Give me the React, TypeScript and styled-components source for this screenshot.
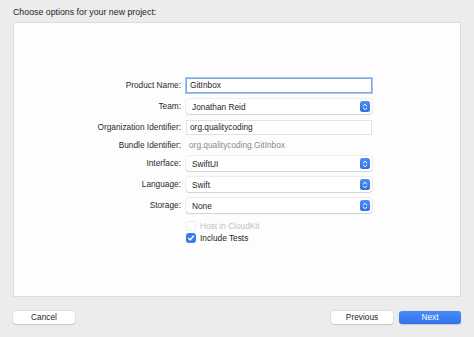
import styled, { createGlobalStyle } from "styled-components";

const GlobalStyle = createGlobalStyle`
  html, body {
    margin: 0;
    padding: 0;
    background: #ececec;
  }
  body {
    font-family: "Liberation Sans", Arial, sans-serif;
    -webkit-font-smoothing: antialiased;
  }
`;

const Window = styled.div`
  width: 474px;
  height: 337px;
  box-sizing: border-box;
  padding: 7px 13px 0 13px;
  display: flex;
  flex-direction: column;
  background: #ececec;
`;

const Title = styled.div`
  font-size: 8.8px;
  color: #262626;
  height: 15px;
  line-height: 11px;
`;

const Panel = styled.div`
  height: 275px;
  box-sizing: border-box;
  background: #fdfdfd;
  border: 1px solid #dcdcdc;
  padding: 55px 0 0 57px;
`;

const Form = styled.div`
  display: grid;
  grid-template-columns: 110px 186px;
  column-gap: 5px;
  align-items: center;
`;

const Label = styled.div<{ $top?: number; $h?: number }>`
  margin-top: ${(p) => p.$top ?? 0}px;
  height: ${(p) => p.$h ?? 15}px;
  line-height: ${(p) => p.$h ?? 15}px;
  text-align: right;
  font-size: 8.3px;
  color: #2a2a2a;
  white-space: nowrap;
`;

const Cell = styled.div<{ $top?: number; $h?: number }>`
  margin-top: ${(p) => p.$top ?? 0}px;
  height: ${(p) => p.$h ?? 15}px;
  display: flex;
  align-items: center;
`;

const TextField = styled.div<{ $focused?: boolean }>`
  width: 100%;
  height: 15px;
  box-sizing: border-box;
  background: #ffffff;
  border: 1px solid ${(p) => (p.$focused ? "#7ea7e8" : "#e2e2e2")};
  box-shadow: ${(p) => (p.$focused ? "0 0 0 1px #a9c5f0" : "none")};
  padding: 0 3px;
  font-size: 8.3px;
  line-height: 13px;
  color: #1e1e1e;
`;

const Popup = styled.div`
  width: 100%;
  height: 15px;
  box-sizing: border-box;
  background: #ffffff;
  border-radius: 3px;
  box-shadow: 0 0 0 0.5px rgba(0, 0, 0, 0.12), 0 1px 1px rgba(0, 0, 0, 0.12);
  display: flex;
  align-items: center;
  justify-content: space-between;
  padding: 0 2px 0 6px;
  font-size: 8.3px;
  color: #1e1e1e;
`;

const Stepper = styled.span`
  width: 10px;
  height: 11px;
  border-radius: 2.5px;
  background: linear-gradient(#4f8ff7, #2f6fe6);
  display: flex;
  align-items: center;
  justify-content: center;
`;

const PlainValue = styled.span`
  font-size: 8.3px;
  color: #8a8a8a;
  padding-left: 3px;
`;

const CheckRow = styled.label<{ $disabled?: boolean }>`
  display: flex;
  align-items: center;
  gap: 4px;
  font-size: 8.3px;
  color: ${(p) => (p.$disabled ? "#c2c2c2" : "#1e1e1e")};
`;

const Box = styled.span<{ $checked?: boolean; $disabled?: boolean }>`
  width: 10px;
  height: 10px;
  box-sizing: border-box;
  border-radius: 2.5px;
  background: ${(p) => (p.$checked ? "#3a7bf0" : "#ffffff")};
  border: 1px solid ${(p) => (p.$checked ? "#3a7bf0" : p.$disabled ? "#ececec" : "#cfcfcf")};
  display: flex;
  align-items: center;
  justify-content: center;
`;

const Footer = styled.div`
  display: flex;
  align-items: center;
  justify-content: space-between;
  padding-top: 14px;
`;

const Group = styled.div`
  display: flex;
  gap: 6px;
`;

const Button = styled.button<{ $primary?: boolean }>`
  width: 62px;
  height: 13px;
  padding: 0;
  border: none;
  border-radius: 3px;
  font-family: "Liberation Sans", Arial, sans-serif;
  font-size: 8.3px;
  line-height: 13px;
  color: ${(p) => (p.$primary ? "#ffffff" : "#1e1e1e")};
  background: ${(p) => (p.$primary ? "linear-gradient(#4a8af6, #2f74ef)" : "#ffffff")};
  box-shadow: ${(p) =>
    p.$primary
      ? "0 0.5px 1px rgba(0, 0, 0, 0.15)"
      : "0 0 0 0.5px rgba(0, 0, 0, 0.1), 0 1px 1px rgba(0, 0, 0, 0.12)"};
`;

function Chevrons() {
  return (
    <svg width="6" height="8" viewBox="0 0 6 8">
      <path d="M1.2 3 L3 1.3 L4.8 3 M1.2 5 L3 6.7 L4.8 5" stroke="#fff" strokeWidth="1" fill="none" strokeLinecap="round" strokeLinejoin="round" />
    </svg>
  );
}

function Check() {
  return (
    <svg width="8" height="8" viewBox="0 0 8 8">
      <path d="M1.6 4.2 L3.3 5.9 L6.4 2" stroke="#fff" strokeWidth="1.4" fill="none" strokeLinecap="round" strokeLinejoin="round" />
    </svg>
  );
}

function Select({ value }: { value: string }) {
  return (
    <Popup>
      <span>{value}</span>
      <Stepper>
        <Chevrons />
      </Stepper>
    </Popup>
  );
}

export default function App() {
  return (
    <>
      <GlobalStyle />
      <Window>
        <Title>Choose options for your new project:</Title>
        <Panel>
          <Form>
            <Label>Product Name:</Label>
            <Cell>
              <TextField $focused>GitInbox</TextField>
            </Cell>

            <Label $top={6}>Team:</Label>
            <Cell $top={6}>
              <Select value="Jonathan Reid" />
            </Cell>

            <Label $top={6}>Organization Identifier:</Label>
            <Cell $top={6}>
              <TextField>org.qualitycoding</TextField>
            </Cell>

            <Label $top={3} $h={14}>Bundle Identifier:</Label>
            <Cell $top={3} $h={14}>
              <PlainValue>org.qualitycoding.GitInbox</PlainValue>
            </Cell>

            <Label $top={4}>Interface:</Label>
            <Cell $top={4}>
              <Select value="SwiftUI" />
            </Cell>

            <Label $top={6}>Language:</Label>
            <Cell $top={6}>
              <Select value="Swift" />
            </Cell>

            <Label $top={6}>Storage:</Label>
            <Cell $top={6}>
              <Select value="None" />
            </Cell>

            <span />
            <Cell $top={7} $h={11}>
              <CheckRow $disabled>
                <Box $disabled />
                Host in CloudKit
              </CheckRow>
            </Cell>

            <span />
            <Cell $top={1} $h={11}>
              <CheckRow>
                <Box $checked>
                  <Check />
                </Box>
                Include Tests
              </CheckRow>
            </Cell>
          </Form>
        </Panel>
        <Footer>
          <Button>Cancel</Button>
          <Group>
            <Button>Previous</Button>
            <Button $primary>Next</Button>
          </Group>
        </Footer>
      </Window>
    </>
  );
}
